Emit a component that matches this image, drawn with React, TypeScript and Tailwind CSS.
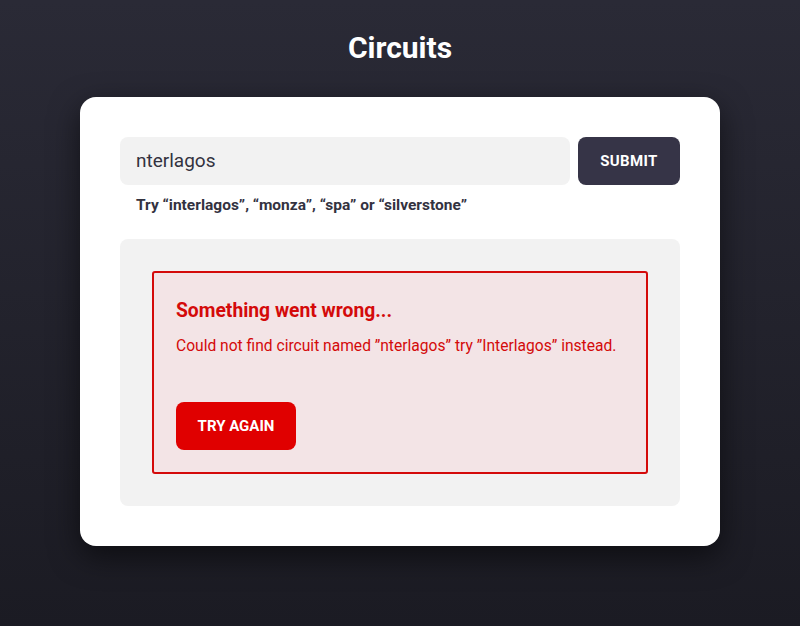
import React from 'react';

const font = { fontFamily: 'Roboto, "Noto Sans", sans-serif' };

const App: React.FC = () => (
  <div
    className="w-full min-h-[626px] bg-gradient-to-b from-[#2a2a36] to-[#1b1b23] flex flex-col items-center pt-[30px]"
    style={font}
  >
    <h1 className="text-[30px] leading-[36px] font-bold text-white">Circuits</h1>

    <div className="mt-[31px] w-[640px] bg-white rounded-2xl p-10 shadow-[0_10px_30px_rgba(0,0,0,0.55)]">
      <div className="flex gap-2">
        <div className="flex-1 h-12 bg-[#f2f2f2] rounded-lg flex items-center px-4 text-[19px] text-[#33323f]">
          nterlagos
        </div>
        <button className="w-[102px] h-12 bg-[#363447] text-white rounded-lg text-[15px] font-bold tracking-wide">
          SUBMIT
        </button>
      </div>
      <p className="mt-[9px] pl-4 text-[15.5px] leading-[22px] font-bold text-[#33323f]">
        Try “interlagos”, “monza”, “spa” or “silverstone”
      </p>

      <div className="mt-[23px] bg-[#f2f2f2] rounded-lg p-8">
        <div className="border-2 border-[#d40a0a] bg-[#f3e4e6] rounded-[3px] px-[22px] pt-[24px] pb-[22px]">
          <h2 className="text-[19.3px] leading-[28px] font-bold text-[#d40a0a]">Something went wrong...</h2>
          <p className="mt-[10px] text-[15.6px] text-[#d40a0a]">
            Could not find circuit named ”nterlagos” try ”Interlagos” instead.
          </p>
          <button className="mt-[44px] w-[120px] h-12 bg-[#e00000] text-white rounded-lg text-[15px] font-bold">
            TRY AGAIN
          </button>
        </div>
      </div>
    </div>
  </div>
);

export default App;
